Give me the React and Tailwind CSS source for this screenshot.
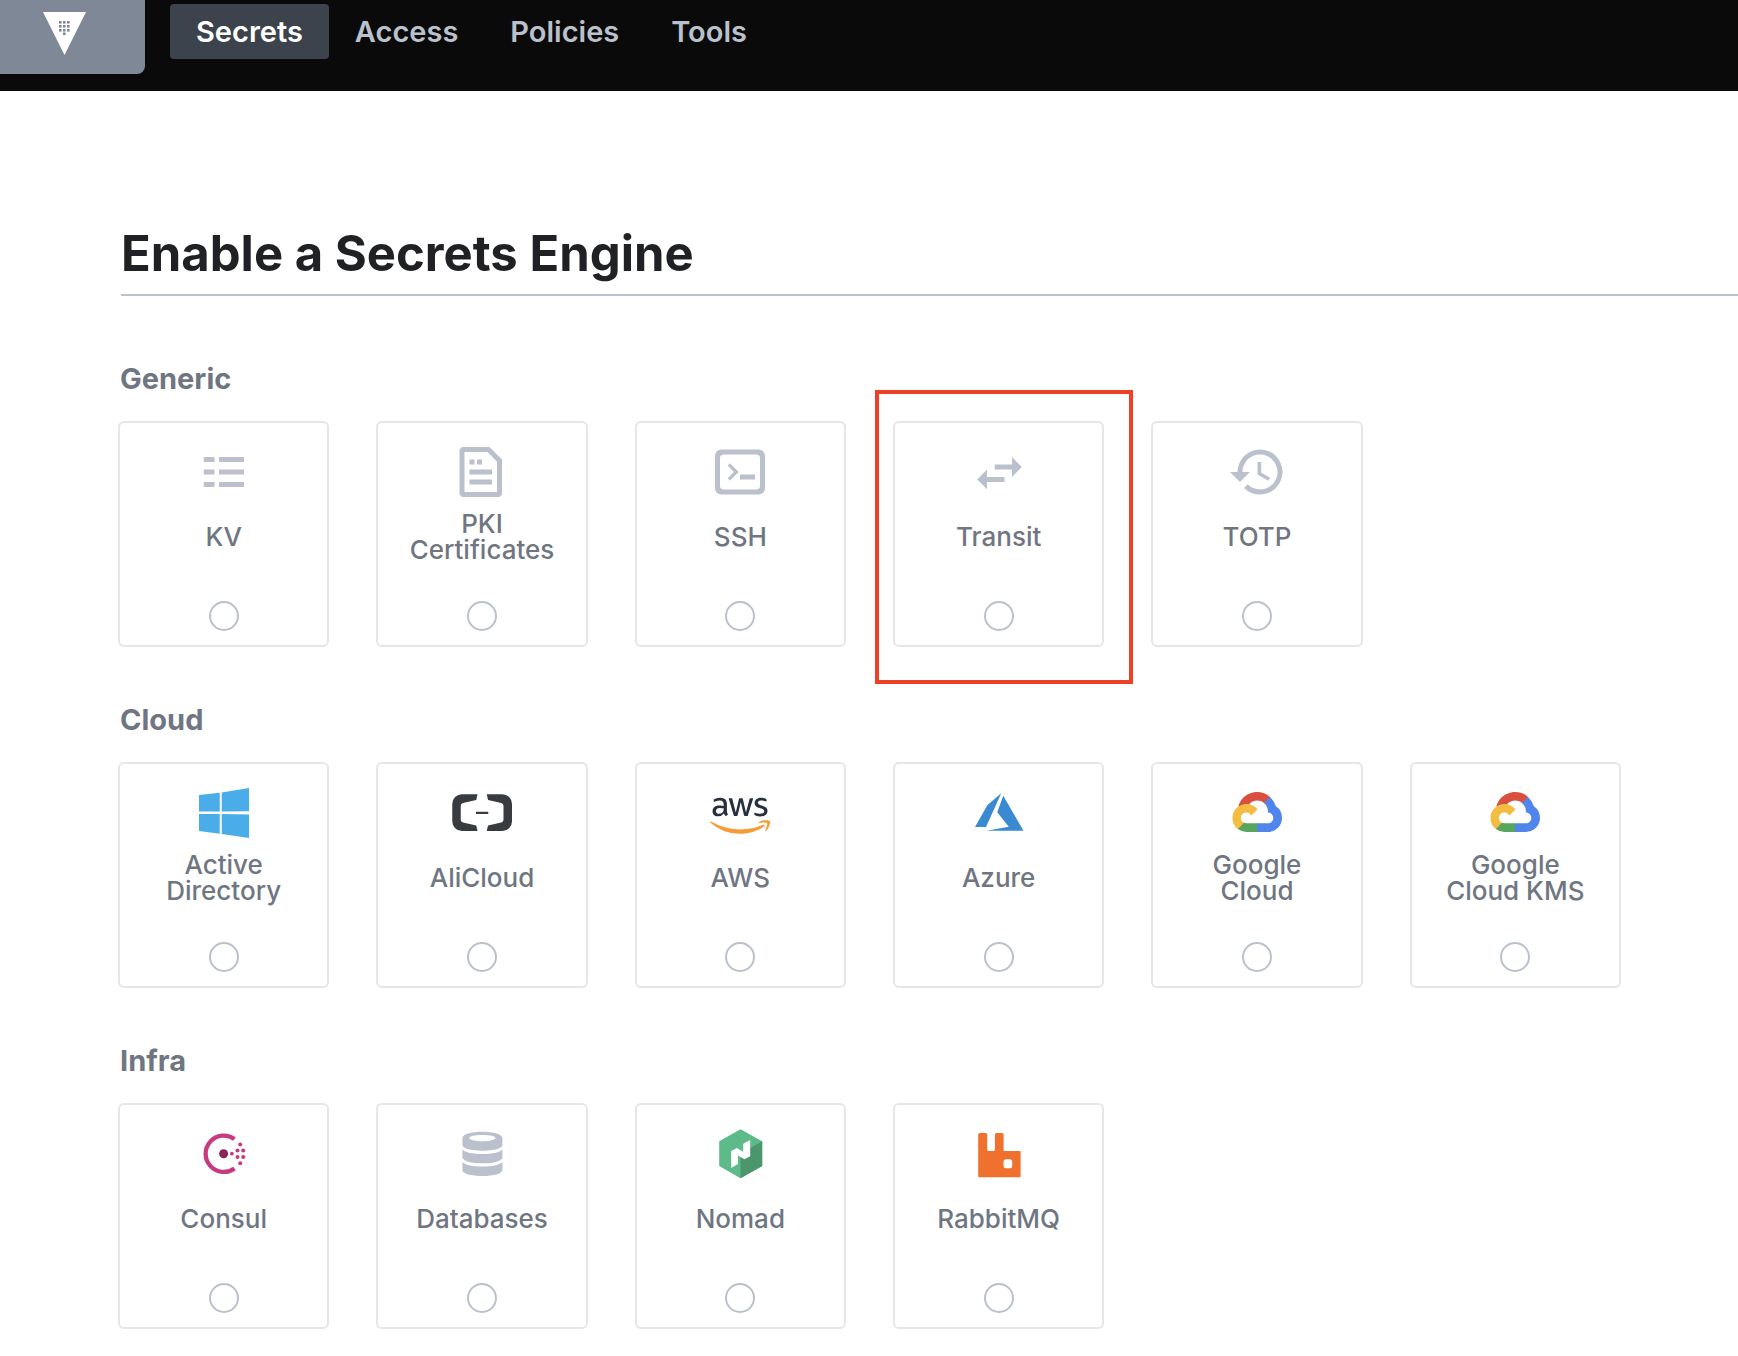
import React from "react";
import { FaAws } from "react-icons/fa";

const GRAY = "#bac1cc";

function Icon({ size = 24, children }) {
  return (
    <svg className="block size-[60px] overflow-visible" viewBox={`0 0 ${size} ${size}`} aria-hidden="true">
      {children}
    </svg>
  );
}

const KvIcon = () => (
  <Icon>
    <path
      fill={GRAY}
      d="M3.9 6h4.3v2H3.9zM10 6h10v2H10zM3.9 11h4.3v2H3.9zM10 11h10v2H10zM3.9 16h4.3v2H3.9zM10 16h10v2H10z"
    />
  </Icon>
);

const PkiIcon = () => (
  <Icon>
    <path
      fill={GRAY}
      fillRule="evenodd"
      d="M4.5 2H15l5 5v13.4A1.5 1.5 0 0 1 18.5 22h-14A1.5 1.5 0 0 1 3 20.4V3.6A1.5 1.5 0 0 1 4.500 2zM5 4v16h13V7.900L14.200 4zM7 7h2v2H7zM10 7h2v2h-2zM7 11h9v2H7zM7 15h9v2H7z"
    />
  </Icon>
);

const SshIcon = () => (
  <Icon>
    <path
      fill={GRAY}
      fillRule="evenodd"
      d="M4.500 3h15A2.500 2.500 0 0 1 22 5.500v13a2.500 2.500 0 0 1-2.500 2.500h-15A2.500 2.500 0 0 1 2 18.500v-13A2.500 2.500 0 0 1 4.500 3zM5.500 5A1.500 1.500 0 0 0 4 6.500v11A1.500 1.500 0 0 0 5.500 19h13a1.500 1.500 0 0 0 1.500-1.500v-11A1.500 1.500 0 0 0 18.500 5zM8 8.500l3.500 3.500L8 15.400l-.9-.9L9.500 12 7.100 9.400zM12 13h6v2h-6z"
    />
  </Icon>
);

const TransitIcon = () => (
  <Icon>
    <path fill={GRAY} d="M7.200 11L3.300 15l3.900 3.900V16h7v-2h-7zM21.100 10L17.200 6v3h-6.900v2h6.900v3z" />
  </Icon>
);

const TotpIcon = () => (
  <Icon>
    <path
      fill={GRAY}
      d="M13.200 3a9 9 0 0 0-9 9h-3l3.890 3.890.07.14L9.200 12h-3c0-3.870 3.130-7 7-7s7 3.130 7 7-3.130 7-7 7c-1.930 0-3.680-.79-4.940-2.060l-1.420 1.420A8.954 8.954 0 0 0 13.200 21a9 9 0 0 0 0-18zm-1 5v5l4.280 2.540.72-1.210-3.500-2.080V8h-1.500z"
    />
  </Icon>
);

const WindowsIcon = () => (
  <Icon>
    <path
      fill="#4aadea"
      d="M2 4.800l8.300-.9v7.500H2zM11.100 3.800L22 2v9.300l-10.900.1zM2 12.400h8.300v7.900L2 19.200zM11.100 12.400l10.900.2V22l-10.900-1.600z"
    />
  </Icon>
);

const AliCloudIcon = () => (
  <Icon>
    <g fill="#383c40">
      <path d="M10.200 4.500H4A3.900 3.900 0 0 0 .1 8.400v6.900A3.900 3.900 0 0 0 4 19.200h6.200l-.5-2.200-5.300-1.200a1.200 1.200 0 0 1-.9-1.200V9.200A1.200 1.200 0 0 1 4.400 8l5.300-1.200z" />
      <path d="M13.900 4.500h6.200A3.900 3.900 0 0 1 24 8.400v6.900a3.900 3.900 0 0 1-3.900 3.900h-6.200l.5-2.200 5.300-1.200a1.200 1.200 0 0 0 .9-1.200V9.200a1.200 1.200 0 0 0-.9-1.200l-5.300-1.200z" />
      <path d="M9.600 11.500h4.900v.9H9.600z" />
    </g>
  </Icon>
);

const AwsIcon = () => (
  <Icon size={60}>
    <clipPath id="aws-word">
      <rect x="0" y="0" width="60" height="35.500" />
    </clipPath>
    <clipPath id="aws-smile">
      <rect x="0" y="35.500" width="60" height="24.500" />
    </clipPath>
    <g clipPath="url(#aws-word)">
      <FaAws x="0" y="2.700" size={60} color="#252f3e" />
    </g>
    <g clipPath="url(#aws-smile)">
      <FaAws x="0" y="2.700" size={60} color="#f79c34" />
    </g>
  </Icon>
);

const AzureIcon = () => (
  <Icon>
    <path
      fill="#3a8ad2"
      d="M12.900 4.100L7.400 8.800 2.400 17.600h4.400zM13.700 5.100l-2.400 6.600 4.600 5.800-8.800 1.600h14.700z"
    />
  </Icon>
);

const GoogleCloudIcon = () => (
  <Icon size={60}>
    <svg x="5.200" y="9" width="50" height="40" viewBox="0 0 256 206">
      <path
        fill="#d9503f"
        d="M170.252 56.819l22.253-22.253 1.483-9.370C153.437-11.677 88.976-7.496 52.421 33.920 42.267 45.423 34.734 59.764 30.717 74.573l7.970-1.123 44.505-7.339 3.436-3.514c19.797-21.742 53.270-24.667 76.128-6.168z"
      />
      <path
        fill="#5086ec"
        d="M224.205 73.918a100.250 100.250 0 0 0-30.217-48.722l-31.232 31.232a55.515 55.515 0 0 1 20.379 44.037v5.544c15.351 0 27.797 12.445 27.797 27.796 0 15.352-12.446 27.485-27.797 27.485h-55.671l-5.466 5.934v33.340l5.466 5.231h55.671c39.930.311 72.552-31.494 72.863-71.424a72.303 72.303 0 0 0-31.793-60.453"
      />
      <path
        fill="#58a55d"
        d="M71.870 205.796h55.593V161.290H71.870a27.275 27.275 0 0 1-11.399-2.498l-7.887 2.420-22.409 22.253-1.952 7.574a72.023 72.023 0 0 0 43.647 14.757"
      />
      <path
        fill="#f2bd42"
        d="M71.870 61.426C31.939 61.664-.237 94.228.001 134.158a72.301 72.301 0 0 0 28.222 56.881l32.248-32.247c-13.991-6.321-20.208-22.786-13.887-36.776 6.320-13.990 22.786-20.207 36.775-13.887a27.796 27.796 0 0 1 13.887 13.887l32.248-32.247A72.226 72.226 0 0 0 71.870 61.426"
      />
    </svg>
  </Icon>
);

const ConsulIcon = () => (
  <Icon size={60}>
    <path d="M40.500 15A18.200 18.200 0 1 0 40.500 44.500" fill="none" stroke="#c73a80" strokeWidth="4.300" />
    <circle cx="29.600" cy="29.700" r="4.500" fill="#8b2457" />
    <g fill="#c73a80">
      <circle cx="37.900" cy="29.700" r="1.900" />
      <circle cx="43.500" cy="26.400" r="2" />
      <circle cx="49.200" cy="26.400" r="2" />
      <circle cx="43.500" cy="33" r="2" />
      <circle cx="49.200" cy="33" r="2" />
      <circle cx="46.200" cy="20.400" r="2" />
      <circle cx="46.200" cy="39.200" r="2" />
    </g>
  </Icon>
);

const DatabaseIcon = () => (
  <Icon size={60}>
    <g fill={GRAY}>
      <path
        fillRule="evenodd"
        d="M10.400 14C10.400 10 19.400 7.700 30.400 7.700S50.400 10 50.400 14V21C50.400 24.500 41.500 26.700 30.400 26.700S10.400 24.500 10.400 21zM30.400 11C23 11 17.200 12.300 17.200 14S23 17.200 30.400 17.200 43.500 15.700 43.500 14 37.800 11 30.400 11z"
      />
      <path d="M10.400 25.500C13 28.500 21 30 30.400 30S47.800 28.500 50.400 25.500V33.200C50.400 37 41.500 39.300 30.400 39.300S10.400 37 10.400 33.200z" />
      <path d="M10.400 38C13 41 21 42.600 30.400 42.600S47.800 41 50.400 38V46C50.400 49.800 41.500 52 30.400 52S10.400 49.800 10.400 46z" />
    </g>
  </Icon>
);

const NomadIcon = () => (
  <Icon size={60}>
    <path fill="#5dba89" d="M30.500 5.300L52.200 17.300V42L30.500 54.300 9.200 42V17.300z" />
    <path fill="#4b966c" d="M30.500 29.700L52.200 17.300V42L30.500 54.300z" />
    <path
      fill="#fff"
      d="M21.200 27L26.900 24 33.200 27.800V19.700L40.200 16V32.300L34.500 35.300 27.900 31.400V40L21.200 44z"
    />
  </Icon>
);

const RabbitIcon = () => (
  <Icon size={60}>
    <path
      fill="#f0702e"
      fillRule="evenodd"
      d="M10.700 9h6a1.500 1.500 0 0 1 1.500 1.500v15A1.500 1.500 0 0 0 19.700 27h4.700a1.500 1.500 0 0 0 1.500-1.500v-15A1.500 1.500 0 0 1 27.400 9h5.700a1.500 1.500 0 0 1 1.500 1.500V27h16a1 1 0 0 1 1 1v24.300a1 1 0 0 1-1 1H10.200a1 1 0 0 1-1-1V10.500A1.500 1.500 0 0 1 10.700 9zM37.200 35.300a2.600 2.600 0 0 0-2.600 2.600v3.800a2.600 2.600 0 0 0 2.600 2.600h3.400a2.600 2.600 0 0 0 2.600-2.600v-3.800a2.600 2.600 0 0 0-2.600-2.600z"
    />
  </Icon>
);

const VaultLogo = () => (
  <svg className="h-[43px] w-[43px]" viewBox="0 0 43 43" aria-hidden="true">
    <path fill="#fff" d="M0 0h43L21.500 43z" />
    <g fill="#7f8896">
      {[9, 13, 17].map((y) =>
        [16, 20, 24].map((x) => <rect key={`${x}-${y}`} x={x} y={y} width="2.600" height="2.600" />)
      )}
      <rect x="20" y="20.500" width="2.600" height="2.600" />
    </g>
  </svg>
);

const navItems = [
  { label: "Secrets", active: true },
  { label: "Access" },
  { label: "Policies" },
  { label: "Tools" },
];

const groups = [
  {
    title: "Generic",
    engines: [
      { id: "kv", label: "KV", icon: KvIcon },
      { id: "pki", label: "PKI Certificates", icon: PkiIcon },
      { id: "ssh", label: "SSH", icon: SshIcon },
      { id: "transit", label: "Transit", icon: TransitIcon, highlighted: true },
      { id: "totp", label: "TOTP", icon: TotpIcon },
    ],
  },
  {
    title: "Cloud",
    engines: [
      { id: "ad", label: "Active Directory", icon: WindowsIcon },
      { id: "alicloud", label: "AliCloud", icon: AliCloudIcon },
      { id: "aws", label: "AWS", icon: AwsIcon },
      { id: "azure", label: "Azure", icon: AzureIcon },
      { id: "gcp", label: "Google Cloud", icon: GoogleCloudIcon },
      { id: "gcpkms", label: "Google Cloud KMS", icon: GoogleCloudIcon },
    ],
  },
  {
    title: "Infra",
    engines: [
      { id: "consul", label: "Consul", icon: ConsulIcon },
      { id: "database", label: "Databases", icon: DatabaseIcon },
      { id: "nomad", label: "Nomad", icon: NomadIcon },
      { id: "rabbitmq", label: "RabbitMQ", icon: RabbitIcon },
    ],
  },
];

function EngineCard({ engine }) {
  const EngineIcon = engine.icon;
  return (
    <label
      htmlFor={engine.id}
      className="relative flex cursor-pointer flex-col items-center rounded-md border-2 border-[#e6e6e6] px-7 pt-[19px] pb-[14px]"
    >
      <EngineIcon />
      <span className="mt-[9px] flex h-[52px] items-center text-center text-[26px] leading-[26px] font-medium text-[#6f7682]">
        {engine.label}
      </span>
      <input
        type="radio"
        id={engine.id}
        name="engine"
        value={engine.id}
        className="mt-[38px] size-[30px] appearance-none rounded-full border-2 border-[#bac1cc] bg-white checked:border-8"
      />
      {engine.highlighted && (
        <span className="pointer-events-none absolute -top-[33px] -right-[31px] -bottom-[39px] -left-5 border-4 border-[#ee4026]" />
      )}
    </label>
  );
}

export default function App() {
  return (
    <div className="min-h-screen overflow-x-hidden bg-white font-['Inter',sans-serif]">
      <header className="flex h-[91px] items-start bg-[#0a0a0a]">
        <a
          href="#home"
          aria-label="Vault home"
          className="flex h-[74px] w-[145px] items-start rounded-br-lg bg-[#7f8896] pt-3 pl-[43px]"
        >
          <VaultLogo />
        </a>
        <nav className="ml-[25px] flex pt-1">
          {navItems.map((item) => (
            <a
              key={item.label}
              href={`#${item.label.toLowerCase()}`}
              className={
                item.active
                  ? "flex h-[55px] items-center rounded bg-[#3d434d] px-[26px] text-[29px] font-semibold text-white"
                  : "flex h-[55px] items-center rounded px-[26px] text-[29px] font-semibold text-[#bac1cc]"
              }
            >
              {item.label}
            </a>
          ))}
        </nav>
      </header>

      <main className="pb-[27px]">
        <div className="ml-[121px] border-b-2 border-[#bac1cc] pt-[133px] pb-[10px]">
          <h1 className="text-[49px] leading-[60px] font-bold text-[#1f2124]">Enable a Secrets Engine</h1>
        </div>
        <form className="mt-[65px] flex flex-col gap-[55px] pr-[117px] pl-[118px]">
          {groups.map((group) => (
            <section key={group.title} aria-label={group.title}>
              <h2 className="pl-0.5 text-[29px] leading-9 font-bold text-[#6f7682]">{group.title}</h2>
              <div className="mt-6 grid grid-cols-6 gap-x-[47px]">
                {group.engines.map((engine) => (
                  <EngineCard key={engine.id} engine={engine} />
                ))}
              </div>
            </section>
          ))}
        </form>
      </main>
    </div>
  );
}
